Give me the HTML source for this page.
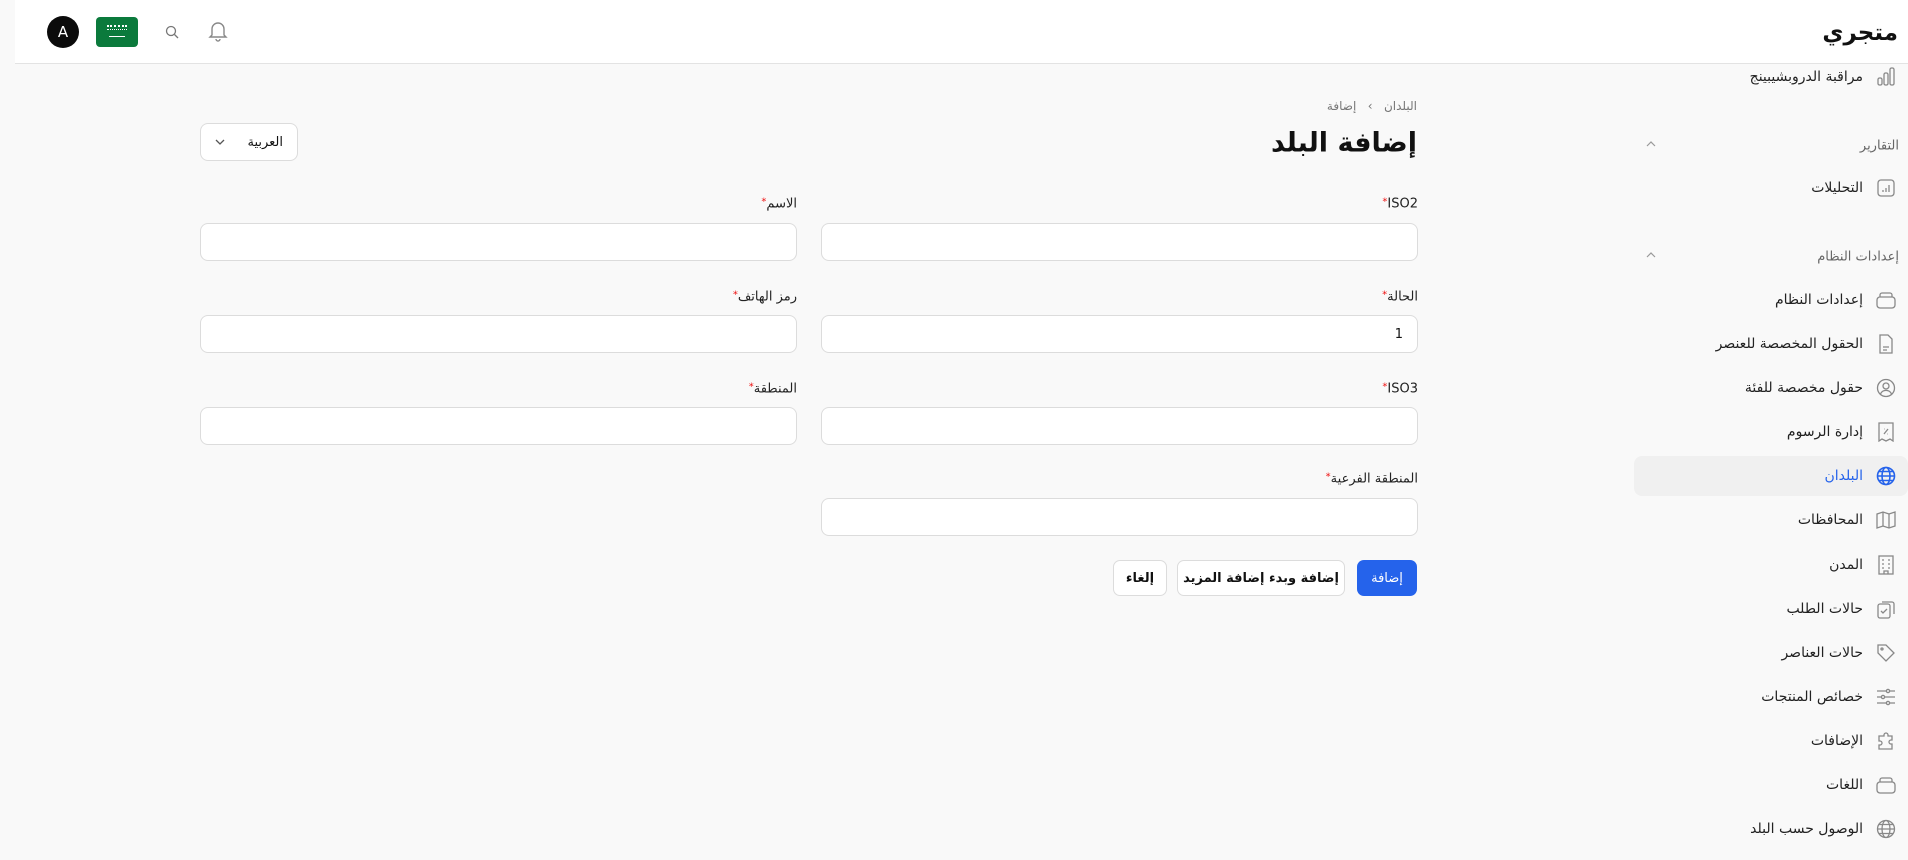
<!DOCTYPE html>
<html><head><meta charset="utf-8"><style>
*{margin:0;padding:0;box-sizing:border-box}
body{width:1908px;height:860px;background:#f9f9f9;font-family:"DejaVu Sans","Liberation Sans",sans-serif;position:relative;overflow:hidden;color:#111}
.abs{position:absolute}
.r{direction:rtl;white-space:nowrap}
.hdr{left:15px;top:0;width:1893px;height:64px;background:#fff;border-bottom:1px solid #e3e3e3}
.si{right:45px;font-size:14px;color:#222;transform:translateY(-50%)}
.ic{right:12px;width:20px;height:20px;transform:translateY(-50%)}
.sec{right:9px;font-size:13px;color:#666;transform:translateY(-50%)}
.chev{left:1645px;transform:translateY(-50%)}
.lbl{font-size:13px;color:#222;transform:translateY(-50%)}
.lbl b{color:#e11;font-weight:normal;font-size:10px;vertical-align:top}
.inp{background:#fff;border:1px solid #dcdcdc;border-radius:8px;height:38px}
.btn{height:36px;border-radius:7px;font-size:13px;font-weight:bold;display:flex;align-items:center;justify-content:center;direction:rtl}
</style></head><body>
<div class="abs hdr"></div>
<div class="abs" style="left:47px;top:16px;width:32px;height:32px;border-radius:50%;background:#0b0b0b;color:#fff;font-size:15px;display:flex;align-items:center;justify-content:center">A</div>
<div class="abs" style="left:96px;top:17px;width:42px;height:30px;border-radius:4px;background:#0b7a3c">
<div class="abs" style="left:11px;top:8px;width:20px;height:5px;border-top:2px dotted #fff;border-bottom:1px dotted #fff"></div>
<div class="abs" style="left:13px;top:19px;width:16px;height:1px;background:#fff"></div></div>
<svg class="abs" style="left:165px;top:25px" width="14" height="14" viewBox="0 0 14 14" fill="none" stroke="#777" stroke-width="1.3"><circle cx="6" cy="6" r="4.5"/><path d="M9.5 9.5l3.5 3.5"/></svg>
<svg class="abs" style="left:208px;top:20px" width="20" height="22" viewBox="0 0 20 22" fill="none" stroke="#888" stroke-width="1.4"><path d="M4 15V9a6 6 0 0112 0v6l2 2H2z"/><path d="M8 19a2 2 0 004 0"/></svg>
<div class="abs r" style="right:10px;top:33px;transform:translateY(-50%);font-size:23px;font-weight:bold">متجري</div>

<!-- sidebar -->
<div class="abs" style="left:1634px;top:456px;width:274px;height:40px;background:#f0f0f0;border-radius:8px"></div>
<div class="abs r si" style="top:77px">مراقبة الدروبشيبينج</div>
<svg class="abs ic" style="top:77px" viewBox="0 0 20 20" fill="none" stroke="#888" stroke-width="1.3"><rect x="2" y="11" width="4" height="7" rx="1.5"/><rect x="8" y="6" width="4" height="12" rx="1.5"/><rect x="14" y="1" width="4" height="17" rx="1.5"/></svg>
<div class="abs r sec" style="top:146px">التقارير</div>
<svg class="abs chev" style="top:144px" width="12" height="8" viewBox="0 0 12 8" fill="none" stroke="#999" stroke-width="1.2"><path d="M2 6l4-4 4 4"/></svg>
<div class="abs r si" style="top:188px">التحليلات</div>
<svg class="abs ic" style="top:188px" viewBox="0 0 20 20" fill="none" stroke="#888" stroke-width="1.3"><rect x="2" y="2" width="16" height="16" rx="3"/><path d="M7 14v-2M10 14v-4M13 14V7"/></svg>
<div class="abs r sec" style="top:257px">إعدادات النظام</div>
<svg class="abs chev" style="top:255px" width="12" height="8" viewBox="0 0 12 8" fill="none" stroke="#999" stroke-width="1.2"><path d="M2 6l4-4 4 4"/></svg>

<div class="abs r si" style="top:300px">إعدادات النظام</div>
<svg class="abs ic" style="top:300px" viewBox="0 0 20 20" fill="none" stroke="#888" stroke-width="1.3"><rect x="1" y="7" width="18" height="11" rx="3"/><path d="M4 7V5a2 2 0 012-2h8a2 2 0 012 2v2"/></svg>
<div class="abs r si" style="top:344px">الحقول المخصصة للعنصر</div>
<svg class="abs ic" style="top:344px" viewBox="0 0 20 20" fill="none" stroke="#888" stroke-width="1.3"><path d="M4 1h8l4 4v14H4z"/><path d="M7 13h6M7 16h4"/></svg>
<div class="abs r si" style="top:388px">حقول مخصصة للفئة</div>
<svg class="abs ic" style="top:388px" viewBox="0 0 20 20" fill="none" stroke="#888" stroke-width="1.3"><circle cx="10" cy="10" r="8.5"/><circle cx="10" cy="8" r="3"/><path d="M4.5 16a6 6 0 0111 0"/></svg>
<div class="abs r si" style="top:432px">إدارة الرسوم</div>
<svg class="abs ic" style="top:432px" viewBox="0 0 20 20" fill="none" stroke="#888" stroke-width="1.3"><path d="M3 1h14v18l-3-2-4 2-4-2-3 2z"/><path d="M8 12l4-5M8 7h.5M11.5 12h.5"/></svg>
<div class="abs r si" style="top:476px;color:#2563eb">البلدان</div>
<svg class="abs ic" style="top:476px" viewBox="0 0 20 20" fill="none" stroke="#2563eb" stroke-width="1.6"><circle cx="10" cy="10" r="8.5"/><ellipse cx="10" cy="10" rx="4" ry="8.5"/><path d="M1.5 10h17M3 5.5h14M3 14.5h14"/></svg>
<div class="abs r si" style="top:520px">المحافظات</div>
<svg class="abs ic" style="top:520px" viewBox="0 0 20 20" fill="none" stroke="#888" stroke-width="1.3"><path d="M1 4l6-2 6 2 6-2v14l-6 2-6-2-6 2z"/><path d="M7 2v14M13 4v14"/></svg>
<div class="abs r si" style="top:565px">المدن</div>
<svg class="abs ic" style="top:565px" viewBox="0 0 20 20" fill="none" stroke="#888" stroke-width="1.3"><rect x="3" y="1" width="14" height="18"/><path d="M6 5h2M12 5h2M6 9h2M12 9h2M6 13h2M12 13h2M8 19v-3h4v3"/></svg>
<div class="abs r si" style="top:609px">حالات الطلب</div>
<svg class="abs ic" style="top:609px" viewBox="0 0 20 20" fill="none" stroke="#888" stroke-width="1.3"><rect x="2" y="5" width="12" height="14" rx="2"/><path d="M6 3h10a2 2 0 012 2v10"/><path d="M5 12l2 2 4-4"/></svg>
<div class="abs r si" style="top:653px">حالات العناصر</div>
<svg class="abs ic" style="top:653px" viewBox="0 0 20 20" fill="none" stroke="#888" stroke-width="1.3"><path d="M2 2h8l8 8-8 8-8-8z"/><circle cx="6" cy="6" r="1"/></svg>
<div class="abs r si" style="top:697px">خصائص المنتجات</div>
<svg class="abs ic" style="top:697px" viewBox="0 0 20 20" fill="none" stroke="#888" stroke-width="1.3"><path d="M1 4h18M1 10h18M1 16h18"/><circle cx="12" cy="4" r="1.6" fill="#f9f9f9"/><circle cx="7" cy="10" r="1.6" fill="#f9f9f9"/><circle cx="12" cy="16" r="1.6" fill="#f9f9f9"/></svg>
<div class="abs r si" style="top:741px">الإضافات</div>
<svg class="abs ic" style="top:741px" viewBox="0 0 20 20" fill="none" stroke="#888" stroke-width="1.3"><path d="M8 4a2 2 0 014 0v1h4v4h-1a2 2 0 000 4h1v5H3v-4h1a2 2 0 000-4H3V5h5z"/></svg>
<div class="abs r si" style="top:785px">اللغات</div>
<svg class="abs ic" style="top:785px" viewBox="0 0 20 20" fill="none" stroke="#888" stroke-width="1.3"><rect x="1" y="7" width="18" height="11" rx="3"/><path d="M4 7V5a2 2 0 012-2h8a2 2 0 012 2v2"/></svg>
<div class="abs r si" style="top:829px">الوصول حسب البلد</div>
<svg class="abs ic" style="top:829px" viewBox="0 0 20 20" fill="none" stroke="#888" stroke-width="1.3"><circle cx="10" cy="10" r="8.5"/><ellipse cx="10" cy="10" rx="4" ry="8.5"/><path d="M1.5 10h17M3 5.5h14M3 14.5h14"/></svg>

<!-- main -->
<div class="abs r" style="right:491px;top:106px;transform:translateY(-50%);font-size:12px;color:#777">البلدان&nbsp;&nbsp;&nbsp;›&nbsp;&nbsp;&nbsp;إضافة</div>
<div class="abs r" style="right:491px;top:143px;transform:translateY(-50%);font-size:27px;font-weight:bold">إضافة البلد</div>
<div class="abs inp" style="left:200px;top:123px;width:98px;height:38px;display:flex;align-items:center;justify-content:space-between;padding:0 14px 0 14px">
<svg width="10" height="6" viewBox="0 0 10 6" fill="none" stroke="#555" stroke-width="1.3"><path d="M1 1l4 4 4-4"/></svg><span class="r" style="font-size:13px">العربية</span></div>

<div class="abs r lbl" style="right:490px;top:204px">ISO2<b>*</b></div>
<div class="abs inp" style="left:821px;top:223px;width:597px"></div>
<div class="abs r lbl" style="right:1111px;top:204px">الاسم<b>*</b></div>
<div class="abs inp" style="left:200px;top:223px;width:597px"></div>

<div class="abs r lbl" style="right:490px;top:297px">الحالة<b>*</b></div>
<div class="abs inp" style="left:821px;top:315px;width:597px;font-size:13px;padding:11px 14px;text-align:right">1</div>
<div class="abs r lbl" style="right:1111px;top:297px">رمز الهاتف<b>*</b></div>
<div class="abs inp" style="left:200px;top:315px;width:597px"></div>

<div class="abs r lbl" style="right:490px;top:389px">ISO3<b>*</b></div>
<div class="abs inp" style="left:821px;top:407px;width:597px"></div>
<div class="abs r lbl" style="right:1111px;top:389px">المنطقة<b>*</b></div>
<div class="abs inp" style="left:200px;top:407px;width:597px"></div>

<div class="abs r lbl" style="right:490px;top:479px">المنطقة الفرعية<b>*</b></div>
<div class="abs inp" style="left:821px;top:498px;width:597px"></div>

<div class="abs btn" style="left:1357px;top:560px;width:60px;background:#2563eb;color:#fff;font-weight:normal">إضافة</div>
<div class="abs btn" style="left:1177px;top:560px;width:168px;background:#fff;border:1px solid #dcdcdc">إضافة وبدء إضافة المزيد</div>
<div class="abs btn" style="left:1113px;top:560px;width:54px;background:#fff;border:1px solid #dcdcdc">إلغاء</div>
</body></html>
